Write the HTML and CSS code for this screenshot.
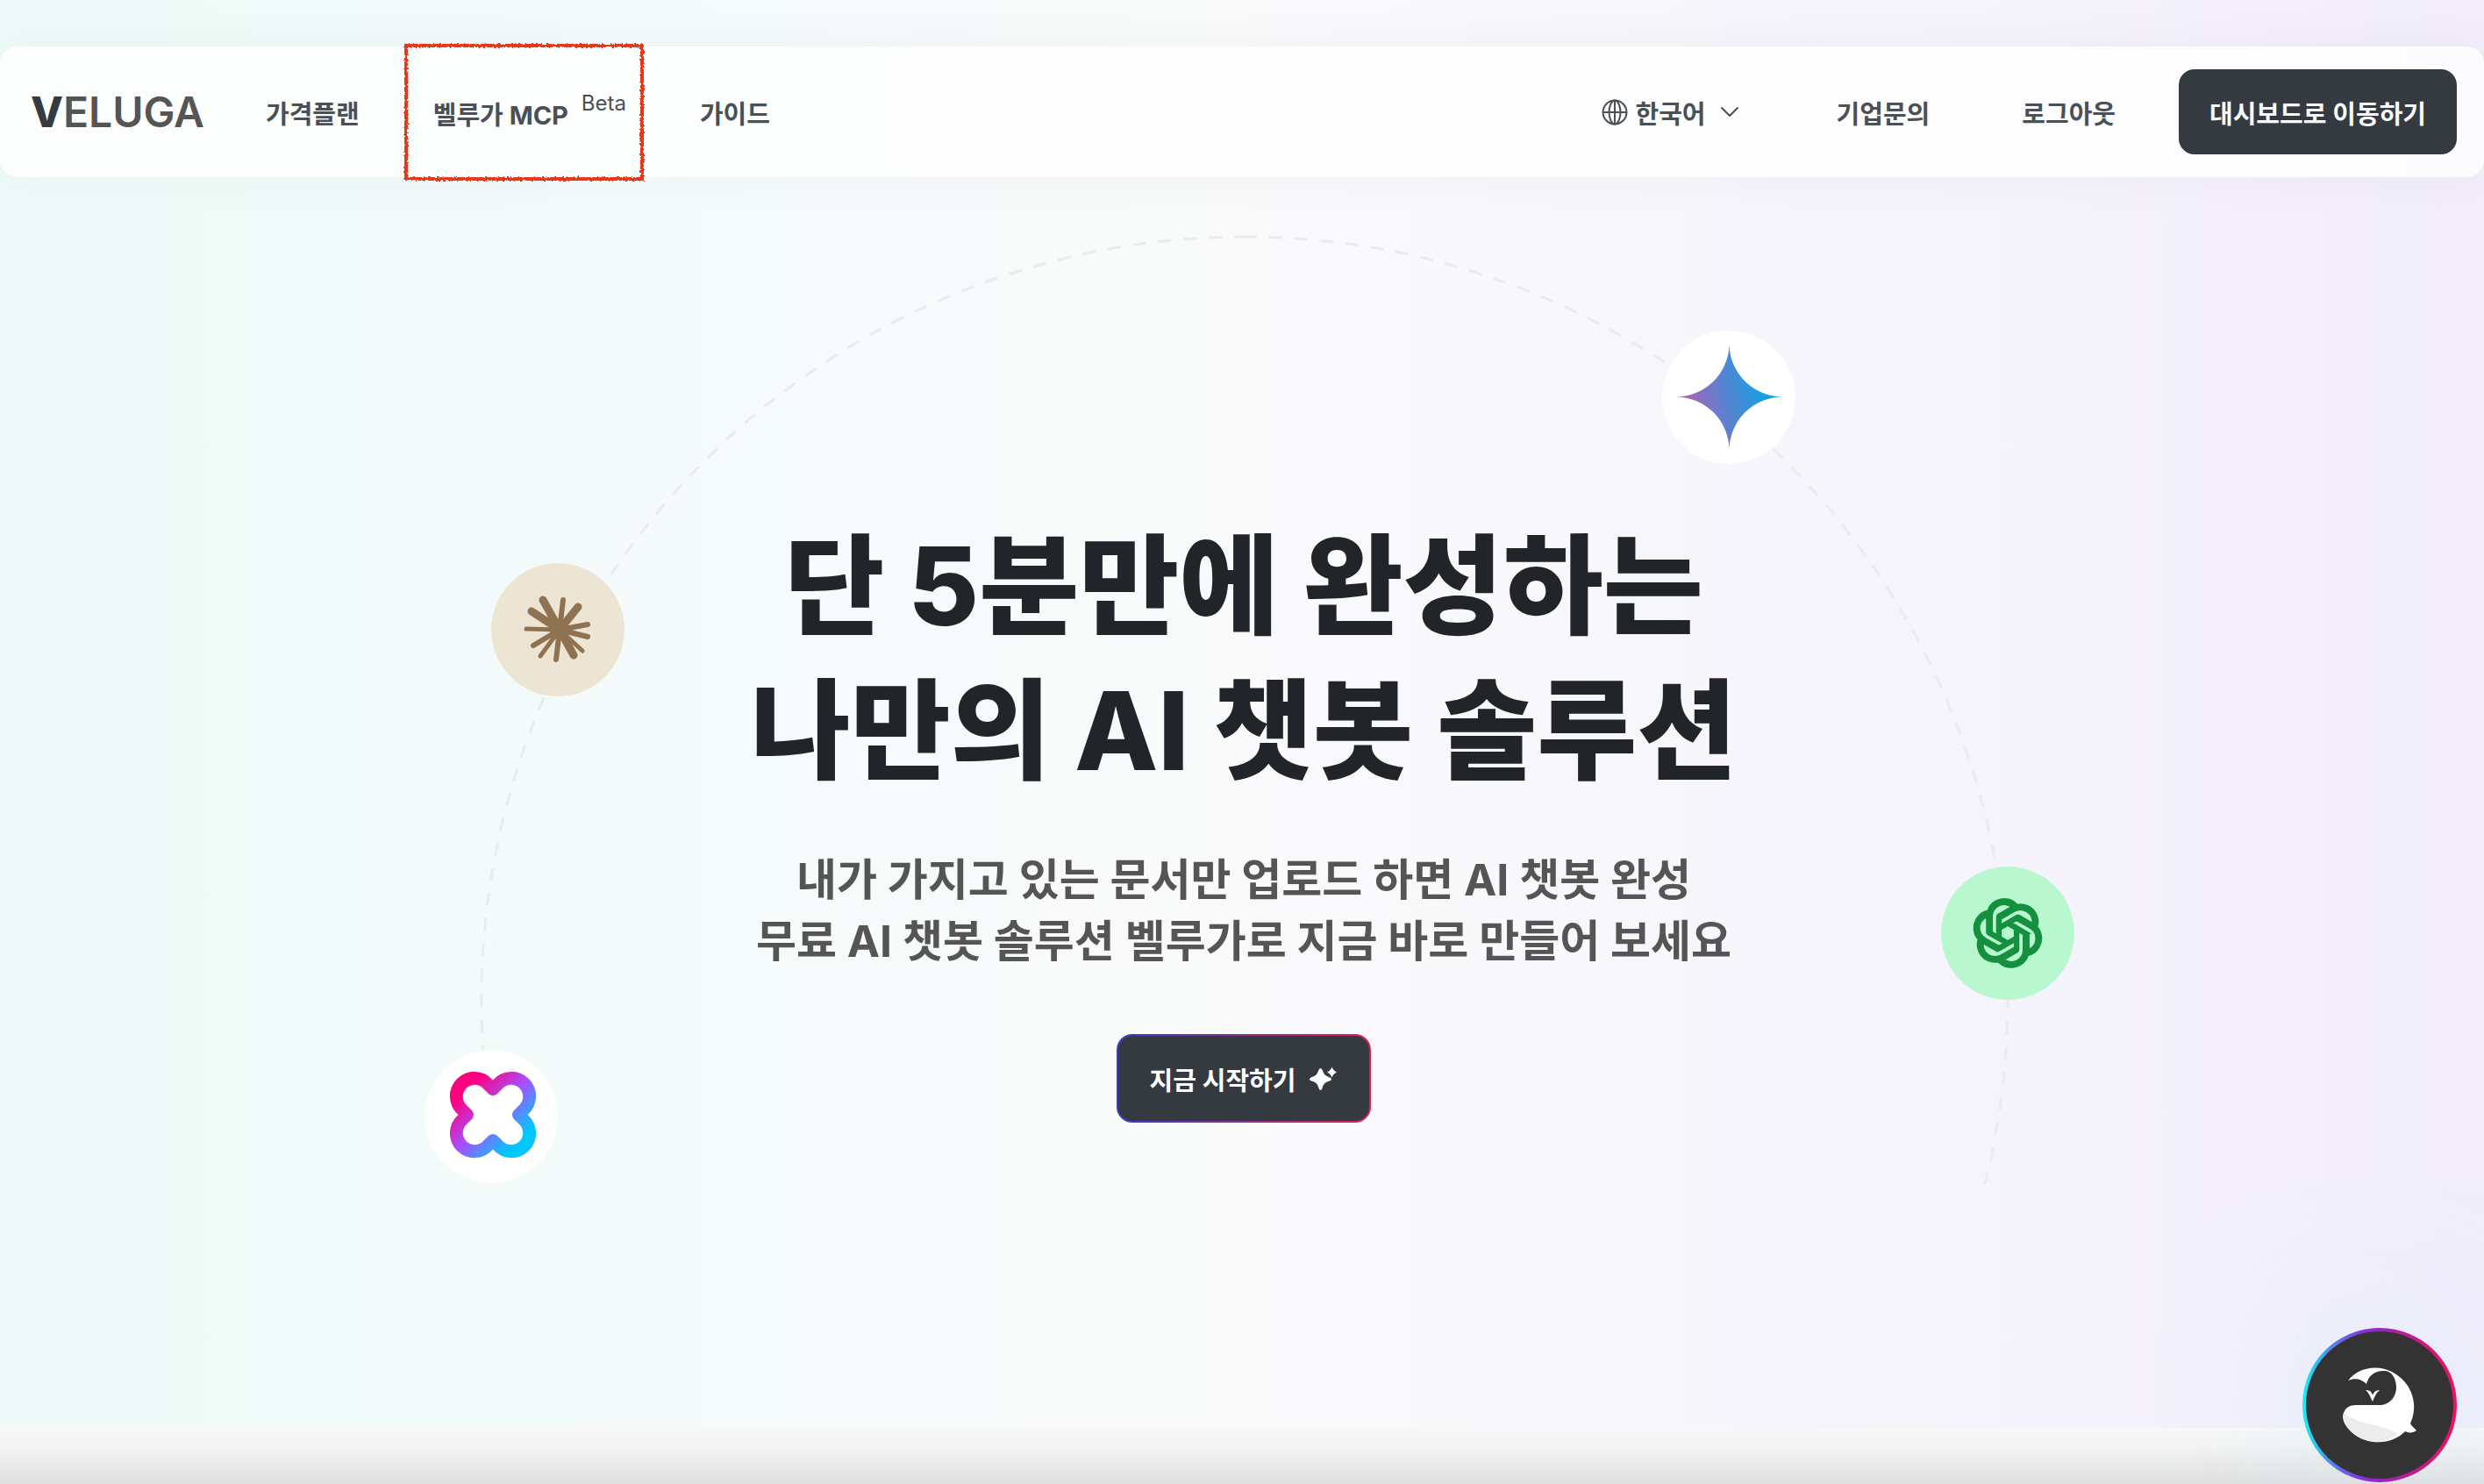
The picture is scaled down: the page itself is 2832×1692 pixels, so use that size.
FILE: index.html
```
<!DOCTYPE html>
<html lang="ko">
<head>
  <meta charset="UTF-8" />
  <meta name="viewport" content="width=device-width, initial-scale=1.0"/>
  <title>VELUGA</title>
  <link rel="stylesheet" href="styles.css">
</head>
<body>

  <header class="header">
    <a class="logo" href="#"><span class="logo-v">V</span>ELUGA</a>
    <nav class="nav">
      <a href="#">가격플랜</a>
      <a class="marked" href="#">벨루가 MCP <span class="beta">Beta</span></a>
      <a href="#">가이드</a>
    </nav>
    <div class="nav nav-right">
      <button class="lang" type="button">
        <svg width="30" height="30" viewBox="0 0 30 30" fill="none" stroke="currentColor" stroke-width="2">
          <circle cx="15" cy="15" r="13.5"/>
          <ellipse cx="15" cy="15" rx="6.5" ry="13.5"/>
          <path d="M1.5 15h27M15 1.500v27"/>
        </svg>
        한국어
        <svg class="chevron" width="22" height="14" viewBox="0 0 22 14" fill="none" stroke="currentColor" stroke-width="2" stroke-linecap="round" stroke-linejoin="round">
          <path d="M2 2l9 9 9-9"/>
        </svg>
      </button>
      <a href="#">기업문의</a>
      <a href="#">로그아웃</a>
    </div>
    <button class="dashboard" type="button">대시보드로 이동하기</button>
  </header>

  <main class="hero">
    <!-- dashed orbit with the model badges -->
    <svg class="orbit" width="1900" height="1140" viewBox="466 240 1900 1140" aria-hidden="true">
      <defs>
        <linearGradient id="gemini" x1="0" y1="0.6" x2="1" y2="0.4">
          <stop offset="0.1" stop-color="#a565b5"/>
          <stop offset="0.45" stop-color="#5a82d0"/>
          <stop offset="0.8" stop-color="#1a9fe2"/>
        </linearGradient>
        <linearGradient id="clover" x1="0" y1="0" x2="1" y2="1">
          <stop offset="0.2" stop-color="#ff0080"/>
          <stop offset="0.5" stop-color="#a352ff"/>
          <stop offset="0.8" stop-color="#00c8ff"/>
        </linearGradient>
      </defs>
      <g fill="none" stroke="#e9ebed" stroke-width="3" stroke-dasharray="15 14" stroke-dashoffset="2">
        <path d="M1420 270A869 869 0 0 1 2263 1350"/>
        <path d="M1420 270A870 870 0 0 0 551 1200"/>
      </g>

      <circle cx="1971" cy="453" r="76" fill="#fff"/>
      <path d="M1971.500 393A61 61 0 0 0 2032 452.500A61 61 0 0 0 1971.500 513A61 61 0 0 0 1911 452.500A61 61 0 0 0 1971.500 393Z" fill="url(#gemini)"/>

      <circle cx="636" cy="718" r="76" fill="#ece5d3"/>
      <g stroke="#8f7250" stroke-linecap="round" fill="#8f7250">
        <circle cx="638" cy="718" r="11" stroke="none"/>
        <path stroke-width="9" d="M638 718L619 684M638 718L606 697M638 718L659 692M638 718L654 747"/>
        <path stroke-width="6" d="M638 718L642 684M638 718L670 712M638 718L670 726M638 718L634 752M638 718L608 736"/>
        <path stroke-width="5" d="M638 718L600 717M638 718L616 748M638 718L664 742"/>
      </g>

      <circle cx="2289" cy="1064" r="76" fill="#b9f8cf"/>
      <svg x="2249" y="1024" width="80" height="80" viewBox="-0.5 -0.5 25 25" fill="#15903f" stroke="#15903f" stroke-width="0.9">
        <path d="M22.282 9.821a5.985 5.985 0 0 0-.516-4.910 6.046 6.046 0 0 0-6.510-2.900A6.065 6.065 0 0 0 4.981 4.182a5.985 5.985 0 0 0-3.998 2.900 6.046 6.046 0 0 0 .743 7.097 5.980 5.980 0 0 0 .511 4.911 6.051 6.051 0 0 0 6.515 2.900A5.985 5.985 0 0 0 13.260 24a6.056 6.056 0 0 0 5.772-4.206 5.990 5.990 0 0 0 3.998-2.900 6.056 6.056 0 0 0-.748-7.073zM13.260 22.430a4.476 4.476 0 0 1-2.876-1.041l.141-.081 4.779-2.758a.795.795 0 0 0 .393-.681v-6.737l2.020 1.169a.071.071 0 0 1 .038.052v5.583a4.504 4.504 0 0 1-4.495 4.494zM3.600 18.304a4.471 4.471 0 0 1-.535-3.014l.142.085 4.783 2.758a.771.771 0 0 0 .781 0l5.843-3.369v2.332a.080.080 0 0 1-.033.062L9.740 19.950a4.499 4.499 0 0 1-6.140-1.646zM2.341 7.896a4.485 4.485 0 0 1 2.366-1.973V11.600a.766.766 0 0 0 .388.677l5.815 3.354-2.020 1.169a.076.076 0 0 1-.071 0l-4.830-2.787A4.504 4.504 0 0 1 2.341 7.872zm16.597 3.855l-5.833-3.387L15.119 7.200a.076.076 0 0 1 .071 0l4.830 2.791a4.494 4.494 0 0 1-.676 8.105v-5.678a.790.790 0 0 0-.407-.667zm2.010-3.023l-.141-.085-4.774-2.782a.776.776 0 0 0-.785 0L9.409 9.230V6.897a.066.066 0 0 1 .028-.061l4.830-2.787a4.499 4.499 0 0 1 6.680 4.660zM8.307 12.863l-2.020-1.164a.080.080 0 0 1-.038-.057V6.075a4.499 4.499 0 0 1 7.375-3.453l-.142.080-4.778 2.758a.795.795 0 0 0-.393.681zm1.097-2.365l2.602-1.500 2.607 1.500v2.999l-2.597 1.500-2.607-1.500z"/>
        <circle cx="12" cy="12" r="0.9" fill="#b9f8cf" stroke="none"/>
      </svg>

      <circle cx="560" cy="1273" r="76" fill="#fff"/>
      <path transform="translate(514 1223)" d="M48 8.500A28 28 0 1 1 87.500 48A28 28 0 1 1 48 87.500A28 28 0 1 1 8.500 48A28 28 0 1 1 48 8.500ZM37.700 18.700A13.500 13.500 0 1 0 18.700 37.700L24.500 43.500Q27.500 48 24.500 52.500L18.700 58.300A13.500 13.500 0 1 0 37.700 77.300L43.500 71.500Q48 68.500 52.500 71.500L58.300 77.300A13.500 13.500 0 1 0 77.300 58.300L71.500 52.500Q68.500 48 71.500 43.500L77.300 37.700A13.500 13.500 0 1 0 58.300 18.700L52.500 24.500Q48 27.500 43.500 24.500Z" fill="url(#clover)" fill-rule="evenodd"/>
    </svg>

    <h1>단 5분만에 완성하는<br>나만의 AI 챗봇 솔루션</h1>
    <p>내가 가지고 있는 문서만 업로드 하면 AI 챗봇 완성<br>무료 AI 챗봇 솔루션 벨루가로 지금 바로 만들어 보세요</p>
    <button class="start" type="button">
      지금 시작하기
      <svg width="32" height="28" viewBox="0 0 32 28" fill="#fff">
        <path d="M12.500 2Q14 2 15 5Q16.500 10 21 11.500Q25 13 25 14.500Q25 16 21 17Q16.500 18.500 15 23Q14 27 12.500 27Q11 27 10 23Q8.500 18.500 4 17Q0 16 0 14.500Q0 13 4 11.500Q8.500 10 10 5Q11 2 12.500 2Z"/>
        <path d="M25.500 0L28 4L31.500 6.500L28 9L25.500 13L23 9L19.500 6.500L23 4Z" stroke="#343a40" stroke-width="1"/>
      </svg>
    </button>
  </main>

  <section class="next"></section>

  <button class="chat" type="button" aria-label="채팅">
    <svg width="84" height="88" viewBox="0 0 84 88">
      <path fill="#fff" d="M6 16C24-6 58-2 74 22C83 36 83 52 77 65C79 69 82 70 84 73C80 76 75 76 71 74C58 88 32 91 14 78C3 70-2 60 1 53C3 47 8 44 15 44H44C54 43 61 34 61 24C61 14 56 6 49 5C36 4 29 11 27 20C21 14 14 13 6 16Z"/>
      <path fill="#ececec" d="M1 53C20 68 40 63 62 77C48 89 28 88 14 78C3 70-1 61 1 53Z"/>
      <path fill="#fff" d="M26 27C31 27 33 29 34 33C35 29 38 27 42 27C38 30 36 35 34 40C32 36 30 30 26 27Z"/>
    </svg>
  </button>

  <!-- hand-drawn edge for the marked menu item -->
  <svg class="defs" width="0" height="0" aria-hidden="true">
    <filter id="rough">
      <feTurbulence type="fractalNoise" baseFrequency="0.4" numOctaves="2" seed="3"/>
      <feDisplacementMap in="SourceGraphic" scale="4"/>
    </filter>
  </svg>
</body>
</html>
```
FILE: styles.css
```
* {
  box-sizing: border-box;
}

body {
  margin: 0;
  min-height: 100vh;
  display: flex;
  flex-direction: column;
  font-family: Inter, "Noto Sans CJK KR", sans-serif;
  color: #495057;
  background: linear-gradient(90deg, #eefbf8 0%, #f3fbfa 20%, #fafafb 50%, #f5f3fc 82%, #f1edfb 100%);
}

a {
  color: inherit;
  text-decoration: none;
}

button {
  font: inherit;
  color: inherit;
  border: none;
  padding: 0;
  background: none;
  cursor: pointer;
}

.header {
  display: flex;
  align-items: center;
  height: 149px;
  margin-top: 53px;
  padding: 0 31px 0 35px;
  border-radius: 20px;
  background-color: rgba(255, 255, 255, 0.8);
  box-shadow: 0 0 60px rgba(0, 0, 0, 0.04);
  font-size: 29px;
  font-weight: 700;
  white-space: nowrap;
}

.logo {
  width: 268px;
  font-size: 48px;
  font-weight: 600;
  color: #555;
}

.logo-v {
  font-weight: 800;
  color: #343a40;
}

.nav {
  display: flex;
  align-items: center;
  gap: 84px;
}

.marked {
  position: relative;
}

.marked::after {
  content: "";
  position: absolute;
  inset: -56px -20px -56px -33px;
  border: 4px solid #e8381b;
  filter: url(#rough);
}

.beta {
  margin-left: 8px;
  font-size: 24px;
  font-weight: 400;
  vertical-align: 16px;
  line-height: 1;
}

.nav-right {
  margin-left: auto;
  margin-right: 72px;
  gap: 105px;
}

.lang {
  display: flex;
  align-items: center;
  gap: 8px;
}

.chevron {
  margin: 0 6px 0 8px;
}

.dashboard {
  height: 97px;
  padding: 0 35px;
  border-radius: 18px;
  background-color: #343a40;
  color: #f8f9fa;
}

.hero {
  position: relative;
  flex: 1;
  display: flex;
  flex-direction: column;
  align-items: center;
  padding: 384px 0 348px 4px;
  text-align: center;
}

.orbit {
  position: absolute;
  top: 38px;
  left: 50%;
  transform: translateX(-50%);
}

.hero h1 {
  position: relative;
  margin: 0;
  font-size: 124px;
  line-height: 165px;
  font-weight: 800;
  color: #212529;
}

.hero p {
  position: relative;
  margin: 52px 0 71px;
  font-size: 50px;
  line-height: 70px;
  font-weight: 700;
  color: #555;
}

.start {
  position: relative;
  display: flex;
  align-items: center;
  gap: 16px;
  height: 101px;
  padding: 0 36px;
  border: 2px solid transparent;
  border-radius: 18px;
  background:
    linear-gradient(#343a40, #343a40) padding-box,
    linear-gradient(90deg, #3c3cc8, #8f2f92 50%, #e01e5a) border-box;
  font-size: 29px;
  font-weight: 700;
  color: #fff;
}

.next {
  height: 64px;
  background: linear-gradient(#f8f8f8, #f4f4f4 30%, #dfdfdf);
}

.chat {
  position: fixed;
  right: 31px;
  bottom: 2px;
  width: 176px;
  height: 176px;
  display: flex;
  align-items: center;
  justify-content: center;
  border: 4px solid transparent;
  border-radius: 50%;
  background:
    linear-gradient(#333, #333) padding-box,
    linear-gradient(90deg, #14f1f5, #4f8be8 18%, #8a2be2 40%, #b01fa0 62%, #f01060) border-box;
  box-shadow: 0 0 150px rgba(210, 235, 250, 0.6);
}

.defs {
  position: absolute;
}
```
